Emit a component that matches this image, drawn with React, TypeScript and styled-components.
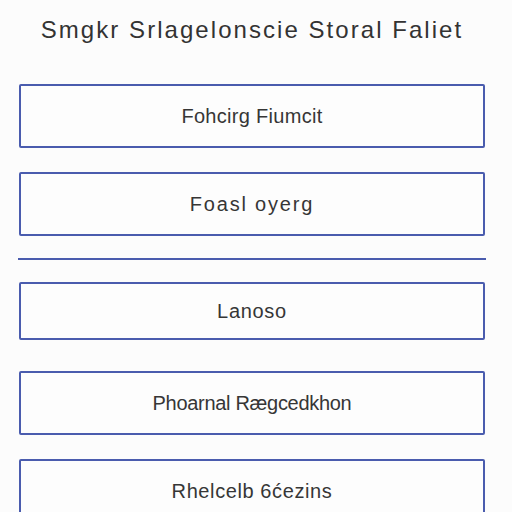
import React from "react";
import styled, { createGlobalStyle } from "styled-components";

const Global = createGlobalStyle`
  html, body { margin: 0; padding: 0; background: #fcfcfc; }
  body { font-family: "Liberation Sans", Arial, sans-serif; }
`;

const Page = styled.div`
  width: 512px;
  height: 512px;
  overflow: hidden;
  box-sizing: border-box;
  padding: 16px 27px 0 19px;
  display: flex;
  flex-direction: column;
  background: #fcfcfc;
`;

const Title = styled.h1`
  margin: 0;
  height: 30px;
  line-height: 28px;
  font-size: 24px;
  font-weight: 400;
  color: #333333;
  text-align: center;
  letter-spacing: 2.05px;
  white-space: nowrap;
`;

const Option = styled.div<{ $top: number; $h?: number; $track?: number }>`
  margin-top: ${(p) => p.$top}px;
  height: ${(p) => p.$h ?? 64}px;
  flex-shrink: 0;
  box-sizing: border-box;
  border: 2px solid #4a5cae;
  border-radius: 2px;
  background: #fdfdfd;
  display: flex;
  align-items: center;
  justify-content: center;
  font-size: 20px;
  letter-spacing: ${(p) => p.$track ?? 0}px;
  color: #363636;
`;

const Divider = styled.hr<{ $top: number }>`
  margin: ${(p) => p.$top}px -1px 0 -1px;
  height: 2px;
  border: none;
  background: #4a5cae;
  flex-shrink: 0;
`;

export default function App() {
  return (
    <>
      <Global />
      <Page>
        <Title>Smgkr Srlagelonscie Storal Faliet</Title>
        <Option $top={40} $track={0.3}>Fohcirg Fiumcit</Option>
        <Option $top={24} $track={1.8}>Foasl oyerg</Option>
        <Divider $top={22} />
        <Option $top={22} $h={58} $track={0.7}>Lanoso</Option>
        <Option $top={31} $track={-0.3}>Phoarnal Rægcedkhon</Option>
        <Option $top={24} $track={0.6}>Rhelcelb 6ćezins</Option>
      </Page>
    </>
  );
}
